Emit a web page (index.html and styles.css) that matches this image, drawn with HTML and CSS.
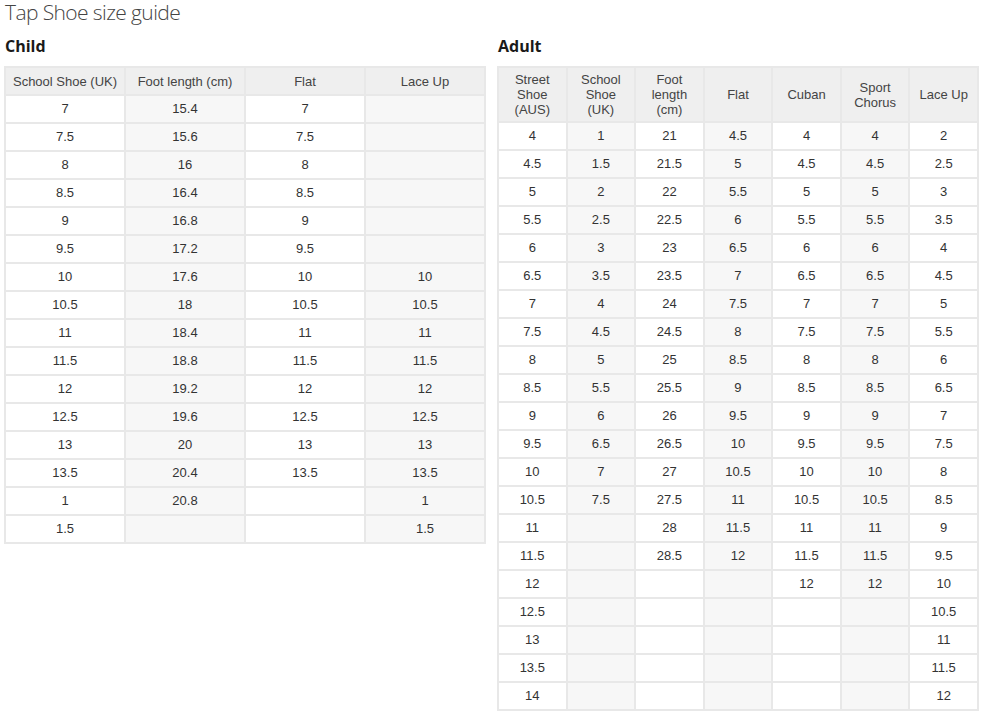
FILE: index.html
```html
<!DOCTYPE html>
<html lang="en">
<head>
<meta charset="utf-8">
<title>Tap Shoe size guide</title>
<link rel="stylesheet" href="styles.css">
</head>
<body>
<div class="page">
  <h1 class="title">Tap Shoe size guide</h1>
  <div class="guides">
    <section class="guide">
      <h2 class="guide-title">Child</h2>
      <table class="size-table">
        <thead>
          <tr><th>School Shoe (UK)</th><th>Foot length (cm)</th><th>Flat</th><th>Lace Up</th></tr>
        </thead>
        <tbody>
          <tr><td>7</td><td>15.4</td><td>7</td><td></td></tr>
          <tr><td>7.5</td><td>15.6</td><td>7.5</td><td></td></tr>
          <tr><td>8</td><td>16</td><td>8</td><td></td></tr>
          <tr><td>8.5</td><td>16.4</td><td>8.5</td><td></td></tr>
          <tr><td>9</td><td>16.8</td><td>9</td><td></td></tr>
          <tr><td>9.5</td><td>17.2</td><td>9.5</td><td></td></tr>
          <tr><td>10</td><td>17.6</td><td>10</td><td>10</td></tr>
          <tr><td>10.5</td><td>18</td><td>10.5</td><td>10.5</td></tr>
          <tr><td>11</td><td>18.4</td><td>11</td><td>11</td></tr>
          <tr><td>11.5</td><td>18.8</td><td>11.5</td><td>11.5</td></tr>
          <tr><td>12</td><td>19.2</td><td>12</td><td>12</td></tr>
          <tr><td>12.5</td><td>19.6</td><td>12.5</td><td>12.5</td></tr>
          <tr><td>13</td><td>20</td><td>13</td><td>13</td></tr>
          <tr><td>13.5</td><td>20.4</td><td>13.5</td><td>13.5</td></tr>
          <tr><td>1</td><td>20.8</td><td></td><td>1</td></tr>
          <tr><td>1.5</td><td></td><td></td><td>1.5</td></tr>
        </tbody>
      </table>
    </section>
    <section class="guide">
      <h2 class="guide-title">Adult</h2>
      <table class="size-table">
        <thead>
          <tr>
            <th>Street<br>Shoe<br>(AUS)</th>
            <th>School<br>Shoe<br>(UK)</th>
            <th>Foot<br>length<br>(cm)</th>
            <th>Flat</th>
            <th>Cuban</th>
            <th>Sport<br>Chorus</th>
            <th>Lace Up</th>
          </tr>
        </thead>
        <tbody>
          <tr><td>4</td><td>1</td><td>21</td><td>4.5</td><td>4</td><td>4</td><td>2</td></tr>
          <tr><td>4.5</td><td>1.5</td><td>21.5</td><td>5</td><td>4.5</td><td>4.5</td><td>2.5</td></tr>
          <tr><td>5</td><td>2</td><td>22</td><td>5.5</td><td>5</td><td>5</td><td>3</td></tr>
          <tr><td>5.5</td><td>2.5</td><td>22.5</td><td>6</td><td>5.5</td><td>5.5</td><td>3.5</td></tr>
          <tr><td>6</td><td>3</td><td>23</td><td>6.5</td><td>6</td><td>6</td><td>4</td></tr>
          <tr><td>6.5</td><td>3.5</td><td>23.5</td><td>7</td><td>6.5</td><td>6.5</td><td>4.5</td></tr>
          <tr><td>7</td><td>4</td><td>24</td><td>7.5</td><td>7</td><td>7</td><td>5</td></tr>
          <tr><td>7.5</td><td>4.5</td><td>24.5</td><td>8</td><td>7.5</td><td>7.5</td><td>5.5</td></tr>
          <tr><td>8</td><td>5</td><td>25</td><td>8.5</td><td>8</td><td>8</td><td>6</td></tr>
          <tr><td>8.5</td><td>5.5</td><td>25.5</td><td>9</td><td>8.5</td><td>8.5</td><td>6.5</td></tr>
          <tr><td>9</td><td>6</td><td>26</td><td>9.5</td><td>9</td><td>9</td><td>7</td></tr>
          <tr><td>9.5</td><td>6.5</td><td>26.5</td><td>10</td><td>9.5</td><td>9.5</td><td>7.5</td></tr>
          <tr><td>10</td><td>7</td><td>27</td><td>10.5</td><td>10</td><td>10</td><td>8</td></tr>
          <tr><td>10.5</td><td>7.5</td><td>27.5</td><td>11</td><td>10.5</td><td>10.5</td><td>8.5</td></tr>
          <tr><td>11</td><td></td><td>28</td><td>11.5</td><td>11</td><td>11</td><td>9</td></tr>
          <tr><td>11.5</td><td></td><td>28.5</td><td>12</td><td>11.5</td><td>11.5</td><td>9.5</td></tr>
          <tr><td>12</td><td></td><td></td><td></td><td>12</td><td>12</td><td>10</td></tr>
          <tr><td>12.5</td><td></td><td></td><td></td><td></td><td></td><td>10.5</td></tr>
          <tr><td>13</td><td></td><td></td><td></td><td></td><td></td><td>11</td></tr>
          <tr><td>13.5</td><td></td><td></td><td></td><td></td><td></td><td>11.5</td></tr>
          <tr><td>14</td><td></td><td></td><td></td><td></td><td></td><td>12</td></tr>
        </tbody>
      </table>
    </section>
  </div>
</div>
</body>
</html>
```

FILE: styles.css
```css
html, body {
  margin: 0;
  padding: 0;
  background: #ffffff;
}

.page {
  padding: 0 5px 0 4px;
}

.title {
  margin: 0;
  padding-left: 1px;
  font-family: "Open Sans", "Liberation Sans", sans-serif;
  font-weight: 300;
  font-size: 21px;
  letter-spacing: -0.6px;
  line-height: 24px;
  color: #444444;
}

.guides {
  display: grid;
  grid-template-columns: 482px 482px;
  column-gap: 11px;
  margin-top: 12px;
  align-items: start;
}

.guide-title {
  margin: 0 0 10px;
  padding-left: 1px;
  font-family: "Open Sans", "Liberation Sans", sans-serif;
  font-weight: 700;
  font-size: 16px;
  line-height: 20px;
  color: #1a1a1a;
}

.size-table {
  width: 100%;
  table-layout: fixed;
  border-collapse: collapse;
  font-family: "Liberation Sans", Arial, sans-serif;
  font-size: 13px;
  color: #333333;
}

.size-table th,
.size-table td {
  border: 2px solid #e8e8e8;
  text-align: center;
  vertical-align: middle;
}

.size-table th {
  background: #efefef;
  font-weight: 400;
  color: #444444;
  line-height: 15px;
  padding: 4px 4px;
  height: 18px;
}

.size-table td {
  line-height: 16px;
  padding: 5px 4px;
  height: 16px;
  background: #ffffff;
}

.size-table td:nth-child(even) {
  background: #f7f7f7;
}
```
